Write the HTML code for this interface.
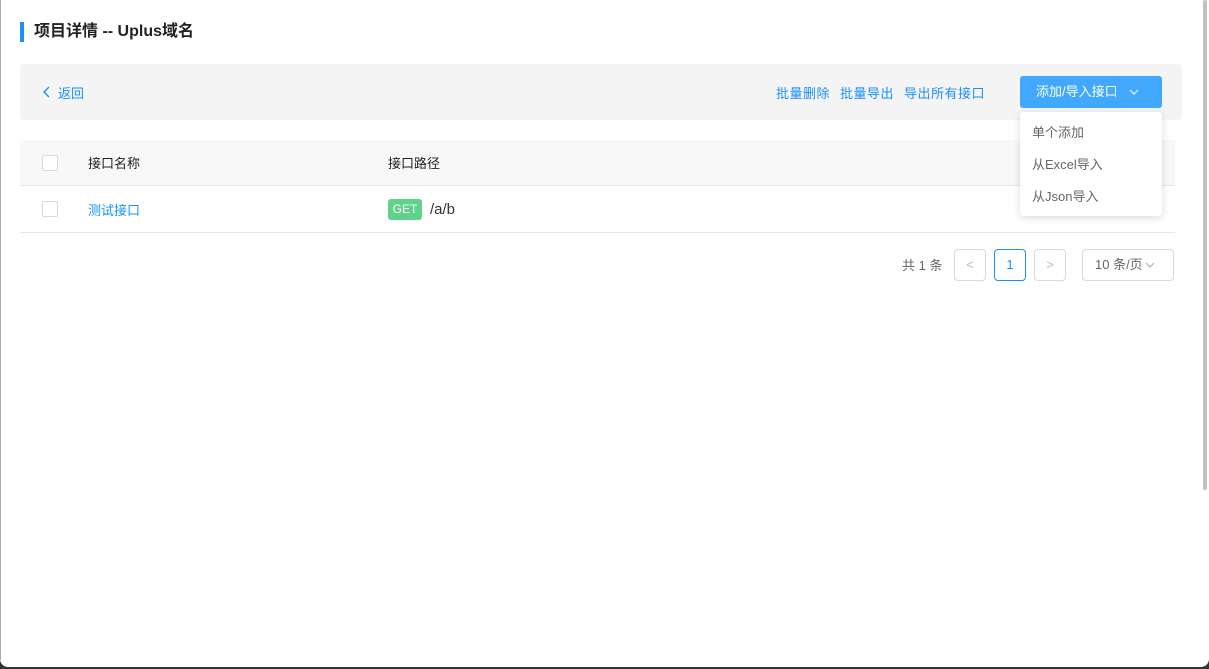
<!DOCTYPE html>
<html><head><meta charset="utf-8"><style>
*{box-sizing:border-box;margin:0;padding:0}
body{width:1209px;height:669px;background:#333;font-family:"Liberation Sans","Noto Sans CJK SC",sans-serif;overflow:hidden;position:relative}
.win{position:absolute;left:0;top:0;width:1209px;height:667px;background:#fff;border-radius:0 0 8px 8px}
.lb{position:absolute;left:0;top:0;width:1px;height:660px;background:#aaa}
.sb{position:absolute;left:1203px;top:0;width:4px;height:490px;background:#c1c1c1;border-radius:2px}
.title{position:absolute;left:20px;top:22px;height:20px;border-left:4px solid #1890ff;padding-left:10px;font-size:16px;font-weight:bold;color:#222;line-height:20px}
.bar{position:absolute;left:20px;top:64px;width:1162px;height:56px;background:#f4f4f4;border-radius:4px}
.back{position:absolute;left:22px;top:19px;font-size:13px;color:#1890ff}
.links{position:absolute;left:756px;top:19px;font-size:13px;color:#1890ff;white-space:nowrap;letter-spacing:0.5px}
.links span{margin-right:10px}
.btn{position:absolute;left:1000px;top:12px;width:142px;height:32px;background:#40a9ff;border-radius:3px;color:#fff;font-size:13px;line-height:32px;padding-left:16px}
.thead{position:absolute;left:20px;top:140px;width:1155px;height:46px;background:#f8f8f8;border-bottom:1px solid #e6e6e6;font-size:13px;color:#222}
.row{position:absolute;left:20px;top:186px;width:1155px;height:47px;border-bottom:1px solid #e6e6e6;font-size:13px}
.cb{position:absolute;left:22px;width:16px;height:16px;border:1px solid #d9d9d9;border-radius:2px;background:#fff}
.get{position:absolute;left:368px;top:13px;width:34px;height:21px;background:#5fd389;border-radius:3px;color:#fff;font-size:12px;line-height:21px;text-align:center}
.pg{position:absolute;top:249px;height:32px;border:1px solid #d9d9d9;border-radius:4px;font-size:13px;color:#bbb;text-align:center;line-height:30px}
.menu{position:absolute;left:1020px;top:112px;width:142px;height:104px;background:#fff;border-radius:4px;box-shadow:0 2px 8px rgba(0,0,0,.15);font-size:13px;color:#666}
.menu div{position:absolute;left:12px}
</style></head><body>
<div class="win">
<div class="lb"></div>
<div class="sb"></div>
<div class="title">项目详情 -- Uplus域名</div>
<div class="bar">
 <div class="back"><svg width="10" height="12" viewBox="0 0 10 12" style="margin-right:6px"><path d="M7 1 L2 6 L7 11" stroke="#1890ff" stroke-width="1.4" fill="none"/></svg>返回</div>
 <div class="links"><span>批量删除</span><span>批量导出</span><span>导出所有接口</span></div>
 <div class="btn">添加/导入接口 <svg width="10" height="8" viewBox="0 0 10 8" style="margin-left:8px"><path d="M1 2 L5 6 L9 2" stroke="#fff" stroke-width="1.2" fill="none"/></svg></div>
</div>
<div class="thead"><div class="cb" style="top:15px"></div><span style="position:absolute;left:68px;top:13px">接口名称</span><span style="position:absolute;left:368px;top:13px">接口路径</span></div>
<div class="row"><div class="cb" style="top:15px"></div><span style="position:absolute;left:68px;top:14px;color:#1890ff">测试接口</span><div class="get">GET</div><span style="position:absolute;left:410px;top:15px;font-size:15px;color:#333">/a/b</span></div>
<span style="position:absolute;left:902px;top:255px;font-size:13px;color:#666">共 1 条</span>
<div class="pg" style="left:954px;width:32px">&lt;</div>
<div class="pg" style="left:994px;width:32px;border-color:#1890ff;color:#1890ff">1</div>
<div class="pg" style="left:1034px;width:32px">&gt;</div>
<div class="pg" style="left:1082px;width:92px;color:#666;text-align:left;padding-left:12px">10 条/页<svg width="10" height="8" viewBox="0 0 10 8" style="margin-left:2px"><path d="M1 2 L5 6 L9 2" stroke="#aaa" stroke-width="1" fill="none"/></svg></div>
<div class="menu"><div style="top:10px">单个添加</div><div style="top:42px">从Excel导入</div><div style="top:74px">从Json导入</div></div>
</div>
</body></html>
